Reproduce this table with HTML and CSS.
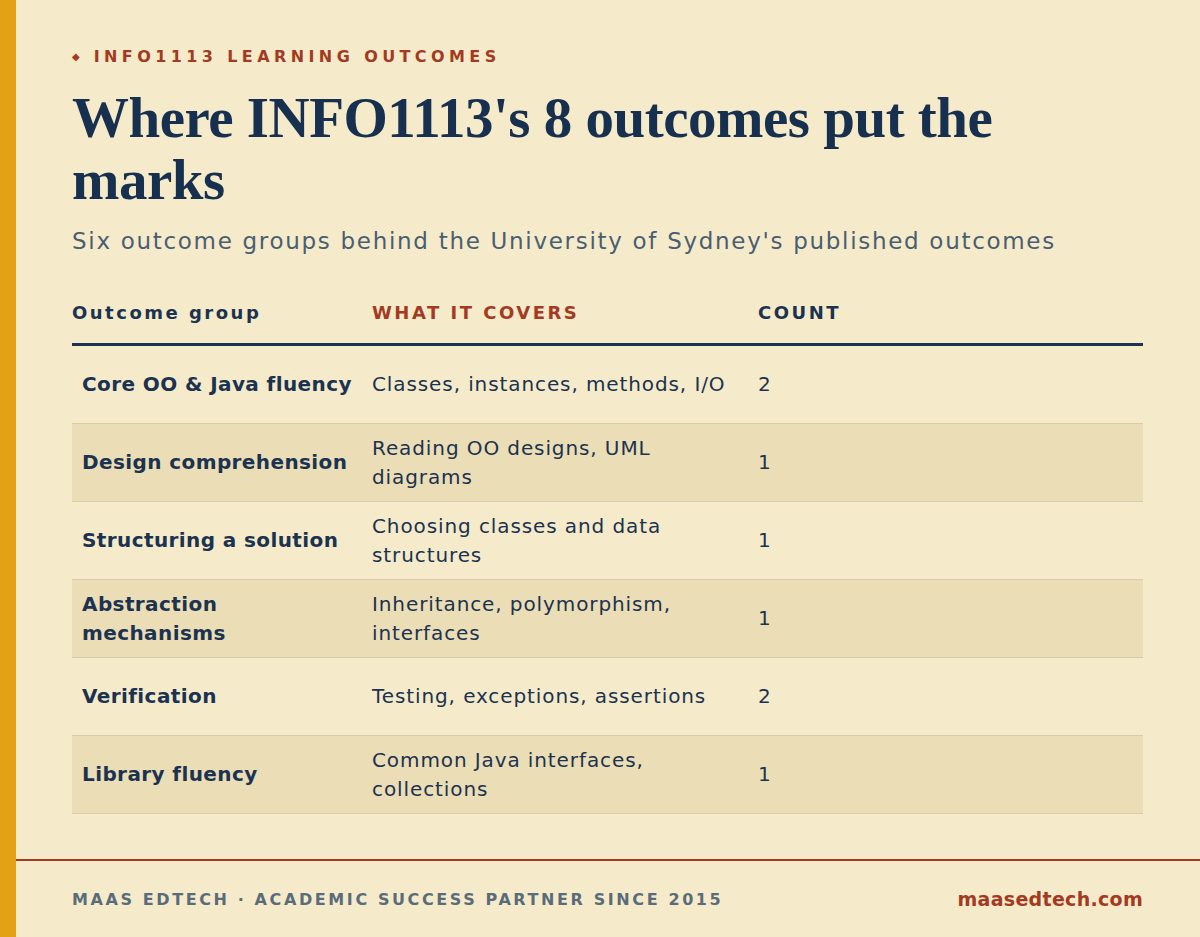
FILE: index.html
```html
<!DOCTYPE html>
<html lang="en">
<head>
<meta charset="utf-8">
<title>INFO1113 learning outcomes</title>
<link rel="stylesheet" href="styles.css">
</head>
<body>
<div class="page">
  <main class="content">
    <div class="eyebrow"><span class="diamond">◆</span>INFO1113 LEARNING OUTCOMES</div>
    <h1 class="title">Where INFO1113's 8 outcomes put the marks</h1>
    <p class="subtitle">Six outcome groups behind the University of Sydney's published outcomes</p>
    <div class="table">
      <div class="thead">
        <div class="th th-first">Outcome group</div>
        <div class="th th-red">WHAT IT COVERS</div>
        <div class="th">COUNT</div>
      </div>
      <div class="row">
        <div class="cell name">Core OO &amp; Java fluency</div>
        <div class="cell">Classes, instances, methods, I/O</div>
        <div class="cell">2</div>
      </div>
      <div class="row alt">
        <div class="cell name">Design comprehension</div>
        <div class="cell">Reading OO designs, UML diagrams</div>
        <div class="cell">1</div>
      </div>
      <div class="row">
        <div class="cell name">Structuring a solution</div>
        <div class="cell">Choosing classes and data structures</div>
        <div class="cell">1</div>
      </div>
      <div class="row alt">
        <div class="cell name">Abstraction mechanisms</div>
        <div class="cell">Inheritance, polymorphism, interfaces</div>
        <div class="cell">1</div>
      </div>
      <div class="row">
        <div class="cell name">Verification</div>
        <div class="cell">Testing, exceptions, assertions</div>
        <div class="cell">2</div>
      </div>
      <div class="row alt">
        <div class="cell name">Library fluency</div>
        <div class="cell">Common Java interfaces, collections</div>
        <div class="cell">1</div>
      </div>
    </div>
  </main>
  <footer class="footer">
    <div class="footer-left">MAAS EDTECH · ACADEMIC SUCCESS PARTNER SINCE 2015</div>
    <div class="footer-right">maasedtech.com</div>
  </footer>
</div>
</body>
</html>
```
FILE: styles.css
```css
* { box-sizing: border-box; }
html, body { margin: 0; padding: 0; }
body {
  background: #F5EBCA;
  font-family: "DejaVu Sans", "Noto Sans", sans-serif;
  color: #1B3350;
}
.page {
  width: 1200px;
  height: 937px;
  border-left: 16px solid #E3A216;
  display: flex;
  flex-direction: column;
}
.content {
  flex: 1;
  padding: 46px 57px 0 56px;
}
.eyebrow {
  font-size: 16px;
  font-weight: bold;
  letter-spacing: 4.4px;
  color: #A33A22;
  line-height: 22px;
  display: flex;
  align-items: center;
}
.diamond {
  font-size: 10px;
  margin-right: 14px;
  letter-spacing: 0;
}
.title {
  font-family: "Liberation Serif", "DejaVu Serif", serif;
  font-weight: bold;
  font-size: 57px;
  letter-spacing: -0.5px;
  line-height: 62px;
  margin: 19px 0 0 0;
  max-width: 960px;
  color: #17304F;
}
.subtitle {
  font-size: 23px;
  letter-spacing: 1.7px;
  color: #4A5E72;
  margin: 15px 0 0 0;
  line-height: 30px;
}
.table {
  margin-top: 39px;
}
.thead {
  display: grid;
  grid-template-columns: 300px 386px 1fr;
  border-bottom: 3px solid #1B3350;
  height: 51px;
  align-items: start;
}
.th {
  font-size: 18px;
  font-weight: bold;
  letter-spacing: 2.5px;
  line-height: 22px;
  color: #1B3350;
  padding-top: 7px;
}
.th-red { color: #A33A22; }
.row {
  display: grid;
  grid-template-columns: 290px 386px 1fr;
  height: 78px;
  border-bottom: 1px solid #D8CCA8;
  align-items: center;
}
.row.alt { background: #EBDDB5; }
.cell {
  padding: 0 10px;
  font-size: 20px;
  letter-spacing: 0.9px;
  line-height: 29px;
  color: #1B3350;
}
.cell.name {
  font-weight: bold;
  letter-spacing: 0.4px;
  padding-right: 6px;
}
.footer {
  height: 78px;
  border-top: 2px solid #A33A22;
  display: flex;
  justify-content: space-between;
  align-items: center;
  padding: 0 57px 0 56px;
}
.footer-left {
  font-size: 16px;
  font-weight: bold;
  letter-spacing: 2.6px;
  color: #5A6B7A;
}
.footer-right {
  font-size: 19px;
  font-weight: bold;
  letter-spacing: 0.3px;
  color: #A33A22;
}
```
